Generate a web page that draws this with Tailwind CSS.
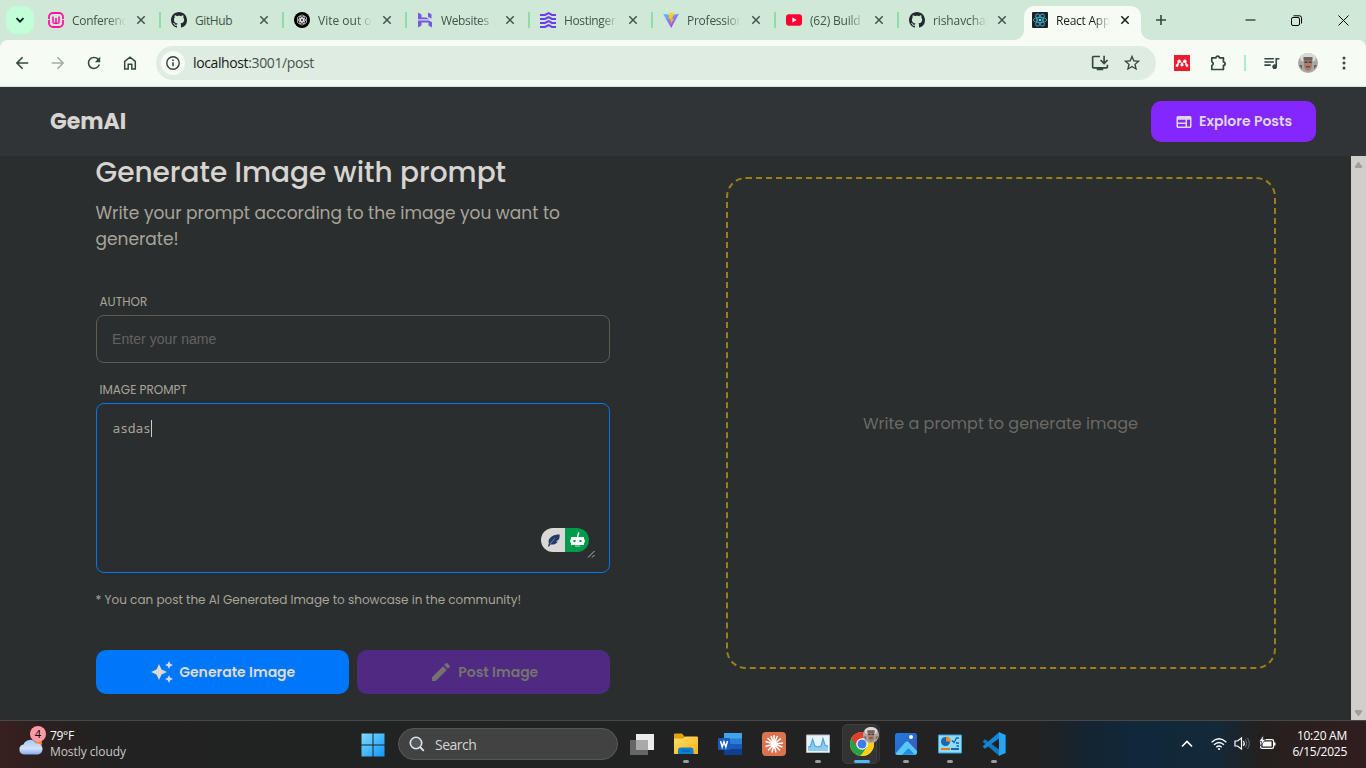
<!DOCTYPE html>
<html lang="en">
<head>
<meta charset="utf-8">
<title>React App</title>
<script src="https://cdn.jsdelivr.net/npm/@tailwindcss/browser@4"></script>
</head>
<body class="w-[1366px] h-[768px] overflow-hidden flex flex-col bg-[#2a2e2f] font-['Open_Sans',sans-serif]">

<svg class="hidden">
  <symbol id="x" viewBox="0 0 10 10"><path d="M1.300 1.300l7.400 7.400M8.700 1.300L1.300 8.700" fill="none" stroke="currentColor" stroke-width="1.500"/></symbol>
  <symbol id="github" viewBox="0 0 16 16"><path fill="#24292f" d="M8 0C3.58 0 0 3.58 0 8c0 3.54 2.29 6.53 5.47 7.59.4.07.55-.17.55-.38 0-.19-.01-.82-.01-1.49-2.01.37-2.53-.49-2.69-.94-.09-.23-.48-.94-.82-1.13-.28-.15-.68-.52-.01-.53.63-.01 1.08.58 1.23.82.72 1.21 1.87.87 2.33.66.07-.52.28-.87.51-1.07-1.78-.2-3.64-.89-3.64-3.95 0-.87.31-1.59.82-2.15-.08-.2-.36-1.02.08-2.12 0 0 .67-.21 2.2.82.64-.18 1.32-.27 2-.27.68 0 1.36.09 2 .27 1.53-1.04 2.2-.82 2.2-.82.44 1.1.16 1.92.08 2.12.51.56.82 1.27.82 2.15 0 3.07-1.87 3.75-3.65 3.95.29.25.54.73.54 1.48 0 1.07-.01 1.93-.01 2.2 0 .21.15.46.55.38A8.012 8.012 0 0016 8c0-4.42-3.58-8-8-8z"/></symbol>
  <symbol id="face" viewBox="0 0 20 20">
    <circle cx="10" cy="10" r="10" fill="#a9a7a5"/><path d="M2 4a10 10 0 0 1 16 0l-1 4H3z" fill="#d9d8d7"/>
    <path d="M6 6h8v7c0 3-2 5-4 5s-4-2-4-5z" fill="#a87f6c"/><path d="M5.500 4h9v3.500h-9z" fill="#6d635f"/><path d="M6.500 8.500h3v1.600h-3zM10.700 8.500h3v1.600h-3z" fill="#4c3a35"/><path d="M8 13h4v1.500H8z" fill="#6d473c"/><path d="M1 12h3v4zM16 12h3l-3 4z" fill="#625c5a"/>
  </symbol>
</svg>

<!-- Tab strip -->
<div class="h-[40px] shrink-0 flex bg-[#d0e8d6] text-[12px] text-[#42544a]">
  <div class="w-[48px] pl-1.5 pt-1.5"><div class="size-[28px] rounded-[10px] bg-[#c2ffd9] flex items-center justify-center"><svg class="size-[10px]" viewBox="0 0 10 10"><path d="M1.500 3.200L5 6.700 8.500 3.200" fill="none" stroke="#0c1f13" stroke-width="1.800"/></svg></div></div>

  <div class="w-[123px] flex items-center">
    <svg class="size-4" viewBox="0 0 16 16"><rect x="1" y="1" width="14" height="14" rx="4" fill="none" stroke="#ff12a8" stroke-width="1.800"/><path d="M5 4.500V10q0 1.300 1.500 1.300T8 10V6v4q0 1.300 1.500 1.300T11 10V4.500" fill="none" stroke="#ff12a8" stroke-width="1.600"/><path d="M0 7.500h1.800M14.200 7.500H16" stroke="#d0e8d6" stroke-width="1.200"/></svg>
    <span class="ml-2 pt-px w-[54px] overflow-hidden whitespace-nowrap tracking-[-0.3px] mask-r-from-65%">Conferenc</span>
    <svg class="ml-[10px] size-[10px]"><use href="#x"/></svg><i class="ml-[13px] w-0.5 h-4 bg-[#8ddcab]"></i>
  </div>
  <div class="w-[123px] flex items-center">
    <svg class="size-4"><use href="#github"/></svg>
    <span class="ml-2 pt-px w-[54px] overflow-hidden whitespace-nowrap tracking-[-0.4px]">GitHub</span>
    <svg class="ml-[10px] size-[10px]"><use href="#x"/></svg><i class="ml-[13px] w-0.5 h-4 bg-[#8ddcab]"></i>
  </div>
  <div class="w-[123px] flex items-center">
    <svg class="size-4" viewBox="0 0 16 16"><circle cx="8" cy="8" r="8" fill="#000"/><g fill="none" stroke="#fff" stroke-width=".6"><ellipse cx="8" cy="6.200" rx="2.500" ry="3.300"/><ellipse cx="8" cy="6.200" rx="2.500" ry="3.300" transform="rotate(60 8 8)"/><ellipse cx="8" cy="6.200" rx="2.500" ry="3.300" transform="rotate(120 8 8)"/><ellipse cx="8" cy="6.200" rx="2.500" ry="3.300" transform="rotate(180 8 8)"/><ellipse cx="8" cy="6.200" rx="2.500" ry="3.300" transform="rotate(240 8 8)"/><ellipse cx="8" cy="6.200" rx="2.500" ry="3.300" transform="rotate(300 8 8)"/></g></svg>
    <span class="ml-2 pt-px w-[54px] overflow-hidden whitespace-nowrap mask-r-from-70%">Vite out o</span>
    <svg class="ml-[10px] size-[10px]"><use href="#x"/></svg><i class="ml-[13px] w-0.5 h-4 bg-[#8ddcab]"></i>
  </div>
  <div class="w-[123px] flex items-center">
    <svg class="size-4" viewBox="0 0 16 16"><path fill="#673de6" d="M1 7.300V.5l3.500 1.900v3h4.600l3.500 1.900zM11 4.700V.5l3.500 1.700v4.500zM1 15.500V8.600h11l3 1.700v5.200l-3.500-1.900v-3H4.500v3z" opacity=".85"/></svg>
    <span class="ml-2 pt-px w-[54px] overflow-hidden whitespace-nowrap tracking-[-0.35px] mask-r-from-70%">Websites |</span>
    <svg class="ml-[10px] size-[10px]"><use href="#x"/></svg><i class="ml-[13px] w-0.5 h-4 bg-[#8ddcab]"></i>
  </div>
  <div class="w-[123px] flex items-center">
    <svg class="size-4" viewBox="0 0 16 16"><path fill="none" stroke="#6b3df0" stroke-width="2" d="M0 3h5l3.500-1.800L12 3h4M0 7h5l3.500-1.800L12 7h4M0 11h5l3.500-1.800L12 11h4M0 15h5l3.500-1.800L12 15h4"/></svg>
    <span class="ml-2 pt-px w-[54px] overflow-hidden whitespace-nowrap tracking-[-0.35px] mask-r-from-70%">Hostinger</span>
    <svg class="ml-[10px] size-[10px]"><use href="#x"/></svg><i class="ml-[13px] w-0.5 h-4 bg-[#8ddcab]"></i>
  </div>
  <div class="w-[123px] flex items-center">
    <svg class="size-4" viewBox="0 0 16 16"><defs><linearGradient id="vA" x1="0" y1="0" x2=".6" y2="1"><stop offset="0" stop-color="#41d1ff"/><stop offset="1" stop-color="#bd34fe"/></linearGradient><linearGradient id="vB" x1="0" y1="0" x2="0" y2="1"><stop offset="0" stop-color="#ffdd35"/><stop offset="1" stop-color="#ff9d00"/></linearGradient></defs><path d="M0 1.700L8 3l8-1.300L8.200 16z" fill="url(#vA)"/><path d="M11.500 0L6 1.100l-.4 6 1.900-.3-.5 2.600 1.300-.4-.8 4 3.500-6.300-2 .3z" fill="url(#vB)"/></svg>
    <span class="ml-2 pt-px w-[54px] overflow-hidden whitespace-nowrap tracking-[-0.25px] mask-r-from-70%">Profession</span>
    <svg class="ml-[10px] size-[10px]"><use href="#x"/></svg><i class="ml-[13px] w-0.5 h-4 bg-[#8ddcab]"></i>
  </div>
  <div class="w-[123px] flex items-center">
    <svg class="size-4" viewBox="0 0 16 16"><rect y="2.300" width="16" height="11.400" rx="3" fill="#ff0033"/><path d="M6.400 5.500L10.700 8l-4.300 2.500z" fill="#fff"/></svg>
    <span class="ml-2 pt-px w-[54px] overflow-hidden whitespace-nowrap tracking-[-0.2px] mask-r-from-70%">(62) Build</span>
    <svg class="ml-[10px] size-[10px]"><use href="#x"/></svg><i class="ml-[13px] w-0.5 h-4 bg-[#8ddcab]"></i>
  </div>
  <div class="w-[115px] flex items-center">
    <svg class="size-4"><use href="#github"/></svg>
    <span class="ml-2 pt-px w-[54px] overflow-hidden whitespace-nowrap tracking-[-0.1px] mask-r-from-70%">rishavchar</span>
    <svg class="ml-[10px] size-[10px]"><use href="#x"/></svg>
  </div>
  <div class="relative w-[117px] mt-1.5 pb-1.5 pl-2 flex items-center rounded-t-[10px] bg-[#f6fbf4] text-[#18201b]">
    <svg class="absolute bottom-0 -left-[10px] size-[10px]" viewBox="0 0 10 10"><path d="M10 0v10H0A10 10 0 0 0 10 0z" fill="#f6fbf4"/></svg>
    <svg class="absolute bottom-0 -right-[10px] size-[10px]" viewBox="0 0 10 10"><path d="M0 0v10h10A10 10 0 0 1 0 0z" fill="#f6fbf4"/></svg>
    <svg class="size-4" viewBox="0 0 16 16"><rect width="16" height="16" rx="1" fill="#1d2126"/><g fill="none" stroke="#3fa9c9" stroke-width=".9"><ellipse cx="8" cy="8" rx="6.700" ry="2.600"/><ellipse cx="8" cy="8" rx="6.700" ry="2.600" transform="rotate(60 8 8)"/><ellipse cx="8" cy="8" rx="6.700" ry="2.600" transform="rotate(120 8 8)"/></g><circle cx="8" cy="8" r="1.300" fill="#61dafb"/></svg>
    <span class="ml-2 pt-px w-[54px] overflow-hidden whitespace-nowrap tracking-[-0.25px] mask-r-from-70%">React App</span>
    <svg class="ml-[10px] size-[10px]"><use href="#x"/></svg>
  </div>
  <div class="flex-1 flex items-center text-black">
    <svg class="ml-[14px] size-3" viewBox="0 0 12 12"><path d="M6 1v10M1 6h10" stroke="#2f4a3a" stroke-width="1.600"/></svg>
    <svg class="ml-[78px] size-[11px]" viewBox="0 0 11 11"><path d="M.5 5h10" stroke="#000"/></svg>
    <svg class="ml-[35px] size-[11px]" viewBox="0 0 11 11"><rect x=".5" y="2.500" width="8" height="8" rx="1.500" fill="none" stroke="#000"/><path d="M2.500.8H8.500q2 0 2 2V8.500" fill="none" stroke="#000"/></svg>
    <svg class="ml-[36px] size-[11px]" viewBox="0 0 11 11"><path d="M.5.5l10 10M10.500.5l-10 10" stroke="#000"/></svg>
  </div>
</div>

<!-- Toolbar -->
<div class="bg-[#d0e8d6] shrink-0">
<div class="h-[46px] flex items-center bg-[#f6fbf4] rounded-t-[8px] text-[#33483d]">
  <svg class="ml-[15px] size-[14px]" viewBox="3 3 18 18"><path fill="currentColor" d="M20 11H7.830l5.590-5.590L12 4l-8 8 8 8 1.410-1.410L7.830 13H20v-2z"/></svg>
  <svg class="ml-[22px] size-[14px] rotate-180 text-[#a3aea7]" viewBox="3 3 18 18"><path fill="currentColor" d="M20 11H7.830l5.590-5.590L12 4l-8 8 8 8 1.410-1.410L7.830 13H20v-2z"/></svg>
  <svg class="ml-[22px] size-[14px]" viewBox="3 3 18 18"><path fill="currentColor" d="M17.650 6.350C16.200 4.900 14.210 4 12 4c-4.420 0-7.990 3.580-7.990 8s3.570 8 7.990 8c3.730 0 6.840-2.550 7.730-6h-2.080c-.82 2.330-3.040 4-5.650 4-3.310 0-6-2.690-6-6s2.690-6 6-6c1.660 0 3.140.69 4.220 1.780L13 11h7V4l-2.350 2.350z"/></svg>
  <svg class="ml-[21px] size-4" viewBox="0 0 16 16"><path d="M2.700 14V6.300L8 2.200l5.300 4.100V14H9.800V9.300H6.200V14z" fill="none" stroke="currentColor" stroke-width="1.500"/></svg>
  <div class="ml-[18px] w-[1000px] h-[34px] rounded-full bg-[#dfece1] flex items-center">
    <div class="ml-[5px] size-6 rounded-full bg-[#f6fbf4] flex items-center justify-center"><svg class="size-[14px]" viewBox="0 0 14 14"><circle cx="7" cy="7" r="6.200" fill="none" stroke="#333f38" stroke-width="1.400"/><path d="M7 6.200v4M7 3.600V5" stroke="#333f38" stroke-width="1.500"/></svg></div>
    <span class="ml-2 pb-px text-[14px] tracking-[-0.38px] text-[#46544c]"><span class="text-[#141a16]">localhost</span>:3001/post</span>
    <svg class="ml-auto size-[18px]" viewBox="1 2 22 20"><path fill="currentColor" d="M20 17H4V5h8V3H4c-1.100 0-2 .9-2 2v12c0 1.100.9 2 2 2h4v2h8v-2h4c1.100 0 2-.9 2-2v-3h-2v3zM17 14l5-5-1.410-1.410L18 10.170V3h-2v7.170l-2.590-2.580L12 9l5 5z"/></svg>
    <svg class="ml-[14px] mr-[15px] size-[18px]" viewBox="1 1 22 22"><path fill="currentColor" d="M22 9.240l-7.190-.62L12 2 9.190 8.630 2 9.240l5.460 4.730L5.820 21 12 17.270 18.180 21l-1.630-7.030L22 9.240zM12 15.400l-3.760 2.270 1-4.280-3.320-2.880 4.380-.38L12 6.100l1.710 4.040 4.380.38-3.320 2.880 1 4.280L12 15.400z"/></svg>
  </div>
  <svg class="ml-[18px] size-4" viewBox="0 0 16 16"><path d="M0 0h16v16H0z" fill="#ea1c2f"/><g fill="none" stroke="#fff" stroke-width="1.600"><path d="M3 11q1.300-1.500 1.200-3.500"/><path d="M13 11q-1.300-1.500-1.200-3.500"/><path d="M6 6.500Q7.500 7 8 10.500 8.500 7 10 6.500" stroke-width="1"/></g><g fill="#fff"><circle cx="5.200" cy="6.300" r="1.700"/><circle cx="10.800" cy="6.300" r="1.700"/><circle cx="8" cy="9.800" r="1.600"/><circle cx="3" cy="10.600" r="1.300"/><circle cx="13" cy="10.600" r="1.300"/></g></svg>
  <svg class="ml-[19px] size-[18px]" viewBox="0 0 18 18"><path d="M2.800 3.800H7a1.700 1.700 0 0 1 3.400 0h4v4.200a1.700 1.700 0 0 1 0 3.400v4.100H2.800v-4a2 2 0 0 0 0-3.800z" fill="none" stroke="currentColor" stroke-width="1.700" stroke-linejoin="round"/></svg>
  <i class="ml-[17px] w-0.5 h-4 bg-[#a8efc4]"></i>
  <svg class="ml-4 size-[19px]" viewBox="0 3 24 20"><path fill="currentColor" d="M15 6H3v2h12V6zm0 4H3v2h12v-2zM3 16h8v-2H3v2zM17 6v8.180c-.31-.11-.65-.18-1-.18-1.660 0-3 1.340-3 3s1.340 3 3 3 3-1.340 3-3V8h3V6h-5z"/></svg>
  <svg class="ml-[17px] size-5"><use href="#face"/></svg>
  <svg class="ml-[18px] size-4" viewBox="0 0 16 16" fill="currentColor"><circle cx="8" cy="3" r="1.500"/><circle cx="8" cy="8" r="1.500"/><circle cx="8" cy="13" r="1.500"/></svg>
</div>
<div class="h-px"></div>
</div>

<!-- App -->
<header class="h-[69px] shrink-0 flex items-center justify-between px-[50px] bg-[#303437] font-[Poppins,Inter,sans-serif]">
  <span class="text-[22px] font-bold text-[#d8d4cf]">GemAI</span>
  <button class="w-[165px] h-[41px] rounded-[10px] bg-[#8427ff] flex items-center justify-center gap-1.5 text-[14px] font-semibold text-[#dcd8e2]"><svg class="size-[18px]" viewBox="0 0 24 24"><path fill="currentColor" d="M20 4H4c-1.110 0-1.990.89-1.990 2L2 18c0 1.100.89 2 2 2h16c1.100 0 2-.9 2-2V6c0-1.100-.9-2-2-2zm-6 14H4v-3.500h10V18zm0-5.500H4V9h10v3.500zm6 5.500h-4V9h4v9z"/></svg><span>Explore Posts</span></button>
</header>

<main class="h-[564px] shrink-0 flex font-[Poppins,Inter,sans-serif] text-[#a9a499]">
  <section class="ml-[96px] w-[514px] flex flex-col">
    <h1 class="-ml-[0.5px] h-8 leading-[34px] text-[28px] font-medium text-[#d8d4cf] whitespace-nowrap">Generate Image with prompt</h1>
    <p class="-ml-[0.5px] mt-3 text-[17px] leading-[26px]"><span class="whitespace-nowrap">Write your prompt according to the image you want to</span> generate!</p>
    <label class="mt-[41px] ml-[3.5px] h-[18px] leading-[18px] text-[12px]">AUTHOR</label>
    <div class="mt-[4px] h-12 rounded-lg border border-[#5f5d58] px-[15px] flex items-center font-['Liberation_Sans',sans-serif] text-[14px] text-[#65635f]"><span class="tracking-[0.06px]">Enter your name</span></div>
    <label class="mt-[18px] ml-[3.5px] h-[18px] leading-[18px] text-[12px]">IMAGE PROMPT</label>
    <div class="relative mt-[4px] h-[170px] rounded-lg border border-[#0274f5] px-[15.5px] pt-[15px]">
      <div class="flex items-center font-['Noto_Sans_Mono','DejaVu_Sans_Mono',monospace] text-[13px] leading-[18px]"><span class="tracking-[-0.15px]">asdas</span><i class="w-px h-[17px] bg-[#d0cdc8]"></i></div>
      <div class="absolute right-[20px] bottom-[20px] w-12 h-6 rounded-full overflow-hidden flex">
        <div class="w-6 bg-[#dad8d4] flex items-center justify-center"><svg class="size-[15px]" viewBox="0 0 16 16"><path fill="#243b66" d="M14.500 1.500C9 1.300 4.500 3.500 3 7.500c-.4 1.200-.3 2.400.1 3.300L2 14.500h1.300l1.500-2.300c3.300.6 6.700-.5 7.700-3.400l-2 .2 3.200-2.200C14.500 5 14.800 3 14.500 1.500z"/><path d="M4 12L9.500 5.500" stroke="#dad8d4" stroke-width=".5"/></svg></div>
        <div class="w-6 bg-[#009b4d] flex items-center justify-center"><svg class="size-4" viewBox="0 0 16 16"><path d="M8.500 5L9.800 .5" stroke="#fff" stroke-width="1.300"/><path d="M2 5h13v8H2z" fill="#fff"/><path d="M1.200 7.500h1v3h-1zM14.800 7.500h1v3h-1z" fill="#fff"/><path d="M4.500 8h2v2h-2zM10.500 8h2v2h-2z" fill="#009b4d"/><path d="M6 13.500h5v1.200H6z" fill="#8fd3af"/></svg></div>
      </div>
      <svg class="absolute right-[14px] bottom-[14px] size-2" viewBox="0 0 8 8"><path d="M1 7.500L7.500 1M5 7.500L7.500 5" stroke="#c9c7c3" stroke-width=".9"/></svg>
    </div>
    <p class="-ml-[0.5px] mt-[18px] h-[18px] leading-[18px] text-[12px] whitespace-nowrap">* You can post the AI Generated Image to showcase in the community!</p>
    <div class="mt-[41px] flex gap-2 text-[14px] font-semibold">
      <button class="w-[253px] h-11 rounded-[10px] bg-[#0076f8] text-[#dcdad6] flex items-center justify-center gap-1.5"><svg class="size-6" viewBox="0 0 24 24"><path fill="currentColor" d="m19 9 1.250-2.750L23 5l-2.750-1.250L19 1l-1.250 2.750L15 5l2.750 1.250L19 9zm-7.500.5L9 4 6.500 9.500 1 12l5.500 2.500L9 20l2.500-5.500L17 12l-5.500-2.500zM19 15l-1.250 2.750L15 19l2.750 1.250L19 23l1.250-2.750L23 19l-2.750-1.250L19 15z"/></svg><span class="-ml-[0.5px]">Generate Image</span></button>
      <button class="w-[253px] h-11 rounded-[10px] bg-[#502a82] text-[#757270] flex items-center justify-center gap-1.5"><svg class="size-6" viewBox="0 0 24 24"><path fill="currentColor" d="M3 17.250V21h3.750L17.810 9.940l-3.750-3.750L3 17.250zM20.710 7.040c.39-.39.39-1.020 0-1.410l-2.340-2.340c-.39-.39-1.020-.39-1.410 0l-1.830 1.830 3.750 3.750 1.830-1.830z"/></svg><span class="-ml-[0.5px]">Post Image</span></button>
    </div>
  </section>
  <section class="ml-[116px] mt-[21px] w-[550px] h-[492px] rounded-[20px] border-2 border-dashed border-[#9c7f16] flex items-center justify-center text-[16px] text-[#6b6964]"><span class="pt-0.5 pr-px">Write a prompt to generate image</span></section>
  <div class="ml-auto w-[15px] bg-[#d1cfcb] flex flex-col items-center justify-between pt-[5px] pb-[3px]">
    <svg class="w-[9px] h-[7px]" viewBox="0 0 9 8"><path d="M4.500.5L9 6.500 8 8H1L0 6.500z" fill="#a19f9b"/></svg>
    <svg class="w-[9px] h-[7px] rotate-180" viewBox="0 0 9 8"><path d="M4.500.5L9 6.500 8 8H1L0 6.500z" fill="#a19f9b"/></svg>
  </div>
</main>

<!-- Taskbar -->
<footer class="h-12 shrink-0 flex items-center border-t border-[#464849] bg-[linear-gradient(90deg,#3a1f1e_0,#2c2020_40px,#222_110px,#212322_300px,#222_1040px,#142432_1090px,#10283a_1130px,#13293a_1215px,#24201f_1260px,#2d1f1e_1320px,#301d20_1366px)] text-[12px] text-white">
  <div class="w-[351px] flex items-center">
    <div class="relative -mt-0.5 ml-[18px] w-7 h-9">
      <svg class="absolute top-[13px] left-0 w-[26px] h-4" viewBox="0 0 26 16"><defs><linearGradient id="cl" x1="0" y1="0" x2="0" y2="1"><stop offset="0" stop-color="#a9c6f5"/><stop offset=".6" stop-color="#d2e1fa"/><stop offset="1" stop-color="#86a8ea"/></linearGradient></defs><circle cx="20.500" cy="4.500" r="3.500" fill="#f58a1f"/><path d="M6 15.500a5 5 0 0 1-.5-9.900A6.800 6.800 0 0 1 18 4.500a5.500 5.500 0 0 1 2 11z" fill="url(#cl)"/></svg>
      <div class="absolute top-0 left-[12px] size-4 rounded-full bg-[#ff99a4] text-black text-[11px] leading-4 text-center">4</div>
    </div>
    <div class="-mt-0.5 ml-1 leading-4"><div class="tracking-[-0.3px]">79°F</div><div class="text-[#c9c8c7] tracking-[-0.07px]">Mostly cloudy</div></div>
  </div>
  <div class="w-[47px] flex pl-[10px]"><svg class="size-6" viewBox="0 0 24 24"><defs><linearGradient id="wn" x1="0" y1="0" x2="1" y2="1"><stop offset="0" stop-color="#7fdcff"/><stop offset="1" stop-color="#0f95fb"/></linearGradient></defs><path d="M.5.5h11v11H.5zM12.500.5h11v11h-11zM.5 12.500h11v11H.5zM12.500 12.500h11v11h-11z" fill="url(#wn)"/></svg></div>
  <div class="-mt-px w-[220px] h-8 rounded-full bg-[#414241] border border-[#585858] flex items-center pl-[10px]">
    <svg class="size-4" viewBox="0 0 16 16"><circle cx="7" cy="7" r="5.700" fill="#54595e" stroke="#dde3e8" stroke-width="1.600"/><path d="M11 11l3.800 3.800" stroke="#dde3e8" stroke-width="1.800"/></svg>
    <span class="ml-[10px] text-[14px] tracking-[-0.5px] text-[#d5d5d5]">Search</span>
  </div>
  <div class="ml-0.5 flex h-full">
    <div class="w-11 flex flex-col items-center pt-[11px]"><svg class="size-6" viewBox="0 0 24 24"><path d="M6 2h18v16H6z" fill="#ececec"/><path d="M0 8h18v15H0z" fill="#666"/><path d="M6 8h12v10H6z" fill="#a9a9a9"/></svg></div>
    <div class="w-11 flex flex-col items-center pt-[11px]"><svg class="size-6" viewBox="0 0 24 24"><defs><linearGradient id="fe" x1="0" y1="0" x2="1" y2="1"><stop offset="0" stop-color="#ffdf6b"/><stop offset="1" stop-color="#f9b413"/></linearGradient></defs><path d="M0 7V2.500Q0 1.500 1 1.500h7l2.500 3-2 2.500z" fill="#e3a008"/><path d="M0 6.500h8.500L11 4.500h12q1 0 1 1V22H0z" fill="url(#fe)"/><path d="M4 22v-3.500q0-3 3-3h9.500q3 0 3 3V22z" fill="#0f7fd1"/><path d="M7.500 19h8.500" stroke="#085ba0"/></svg><i class="mt-[4px] w-1.5 h-[3px] rounded-full bg-[#9b9b9b]"></i></div>
    <div class="w-11 flex flex-col items-center pt-[11px]"><svg class="size-6" viewBox="0 0 24 24"><path d="M6 1h18v6H6z" fill="#41a5ee"/><path d="M6 6.500h18V12H6z" fill="#2b7cd3"/><path d="M6 12h18v5.500H6z" fill="#185abd"/><path d="M6 17.500h18V23H6z" fill="#103f91"/><rect y="6" width="12" height="12" rx="1" fill="#185abd"/><path d="M2.500 9l1.700 6L6 9.800 7.800 15l1.700-6" fill="none" stroke="#fff" stroke-width="1.500"/></svg></div>
    <div class="w-11 flex flex-col items-center pt-[11px]"><svg class="size-6" viewBox="0 0 24 24"><rect width="24" height="24" rx="4" fill="#d97350"/><path d="M12 12V3M12 12l3.500-8M12 12l7-5.500M12 12l9-1M12 12l8.500 3M12 12l6 6.500M12 12l2 8.500M12 12l-2 8.500M12 12l-6 6.500M12 12l-8.500 2.500M12 12L3.500 9.500M12 12L5.500 6M12 12L9 4" stroke="#fff" stroke-width="1.500"/></svg></div>
    <div class="w-11 flex flex-col items-center pt-[11px]"><svg class="size-6" viewBox="0 0 24 24"><path d="M.5 3h23v17.500H.5z" fill="#eaf3fa" stroke="#b3bcc3"/><path d="M2 19v-4l2.500-.5L6.500 7l2.500 7 3 1 3-1 2-7.500L19 13l3 1.500V19z" fill="#8ccbf2"/><path d="M2 15l2.500-.5L6.500 7 9 14l3 1 3-1 2-7.500 2 6.500 3 1.500" fill="none" stroke="#4ba3d8" stroke-width="1.100"/></svg><i class="mt-[4px] w-1.5 h-[3px] rounded-full bg-[#9b9b9b]"></i></div>
    <div class="relative w-11 flex flex-col items-center pt-[11px]">
      <div class="absolute left-2.5 top-[3px] w-[30px] h-10 rounded-[5px] bg-[#2b2b2b] border border-[#363636]"></div>
      <div class="absolute left-0.5 top-[3px] w-[35px] h-10 rounded-[5px] bg-[#333] border border-[#3f3f3f]"></div>
      <svg class="relative size-6" viewBox="0 0 24 24"><circle cx="12" cy="12" r="12" fill="#ffcf1b"/><path d="M12 12L1.600 6A12 12 0 0 0 10.500 23.900L17.200 15z" fill="#24a149"/><path d="M1.600 6A12 12 0 0 1 22.400 6H12L7 15z" fill="#e63b2e"/><path d="M12 6h10.400A12 12 0 0 1 12 24h-1.500L17.200 15z" fill="#ffcf1b"/><circle cx="12" cy="12" r="5.800" fill="#fff"/><circle cx="12" cy="12" r="4.500" fill="#3b7ded"/></svg>
      <svg class="absolute left-[23px] top-[6px] size-4"><use href="#face"/></svg>
      <i class="relative mt-[4px] w-4 h-[3px] rounded-full bg-[#4cb9f5]"></i>
    </div>
    <div class="w-11 flex flex-col items-center pt-[11px]"><svg class="size-6" viewBox="0 0 24 24"><defs><linearGradient id="ph" x1="0" y1="0" x2="1" y2="1"><stop offset="0" stop-color="#1a7fe0"/><stop offset="1" stop-color="#4450b8"/></linearGradient></defs><rect x="1" y="1" width="22" height="22" rx="2.500" fill="url(#ph)"/><path d="M1.500 21.500L11.500 10q1.500-1.500 3 0L23 19v1q0 3-3 3H4q-2 0-2.500-1.500z" fill="#55c8f5"/><path d="M8 23l5.500-6q1-1 2 0l5 5.500z" fill="#1f8fe0"/><circle cx="17" cy="5" r="2" fill="#fff"/></svg><i class="mt-[4px] w-1.5 h-[3px] rounded-full bg-[#9b9b9b]"></i></div>
    <div class="w-11 flex flex-col items-center pt-[11px]"><svg class="size-6" viewBox="0 0 24 24"><path d="M.5 3h23v18H.5z" fill="#8edaf8" stroke="#3aa0d8"/><circle cx="7.500" cy="9.500" r="4.500" fill="#1467b3"/><path d="M8 4.500a5 5 0 0 1 5 5H8z" fill="#f28b1c"/><path d="M14 8.500l2 2 2.500-4.500H21M18 11h3M18.500 14H21" fill="none" stroke="#1467b3" stroke-width="1.300"/><path d="M3 17h9" stroke="#e67a17" stroke-width="2"/><path d="M13 17h8" stroke="#1467b3" stroke-width="2"/></svg><i class="mt-[4px] w-1.5 h-[3px] rounded-full bg-[#9b9b9b]"></i></div>
    <div class="w-11 flex flex-col items-center pt-[11px]"><svg class="size-6" viewBox="0 0 24 24"><path d="M17 .3L23.500 3v18L17 23.700 .5 9.500 3 7.300 17 17.500z" fill="#1178c4"/><path d="M17 6.500L3 16.700.5 14.500 17 .3z" fill="#1685d3"/><path d="M17 .3L23.500 3v18L17 23.700z" fill="#27a4f2"/></svg><i class="mt-[4px] w-1.5 h-[3px] rounded-full bg-[#9b9b9b]"></i></div>
  </div>
  <div class="-mt-0.5 ml-auto mr-[19px] flex items-center">
    <svg class="size-3" viewBox="0 0 12 12"><path d="M1 8.500l5-5 5 5" fill="none" stroke="#fff" stroke-width="1.600"/></svg>
    <svg class="ml-[18px] size-4" viewBox="0 0 16 16" fill="none" stroke="#fff" stroke-width="1.300"><path d="M.6 6.200q7.400-6.800 14.800 0M3 8.800q5-4.600 10 0M5.300 11.200q2.700-2.400 5.400 0"/><circle cx="8" cy="13" r="1.100" fill="#fff" stroke="none"/></svg>
    <svg class="ml-[7px] size-[17px]" viewBox="0 0 17 17" fill="none"><path d="M1 6v5h2.500L7.500 14V3L3.500 6z" stroke="#fff" stroke-width="1.200"/><path d="M9.500 6q1.500 2.500 0 5" stroke="#fff" stroke-width="1.200"/><path d="M11.500 4.500q2.500 4 0 8M13.500 3q3.500 5.500 0 11" stroke="#6d7378"/></svg>
    <svg class="ml-[8px] size-[17px]" viewBox="0 0 17 17"><rect x="1.600" y="4.600" width="13" height="8.800" rx="1.600" fill="none" stroke="#fff" stroke-width="1.200"/><path d="M3.500 6.500h9v5h-9z" fill="#fff"/><path d="M15 7.500h1.500v3H15z" fill="#fff"/><path d="M4.500 0L0 6.500h2.500L1.500 11 6.500 4.500H4z" fill="#fff" stroke="#1c2830" stroke-width=".7"/></svg>
    <div class="ml-[11px] w-[60px] text-right leading-4 whitespace-nowrap tracking-[-0.25px]"><div>10:20 AM</div><div>6/15/2025</div></div>
  </div>
</footer>
</body>
</html>
